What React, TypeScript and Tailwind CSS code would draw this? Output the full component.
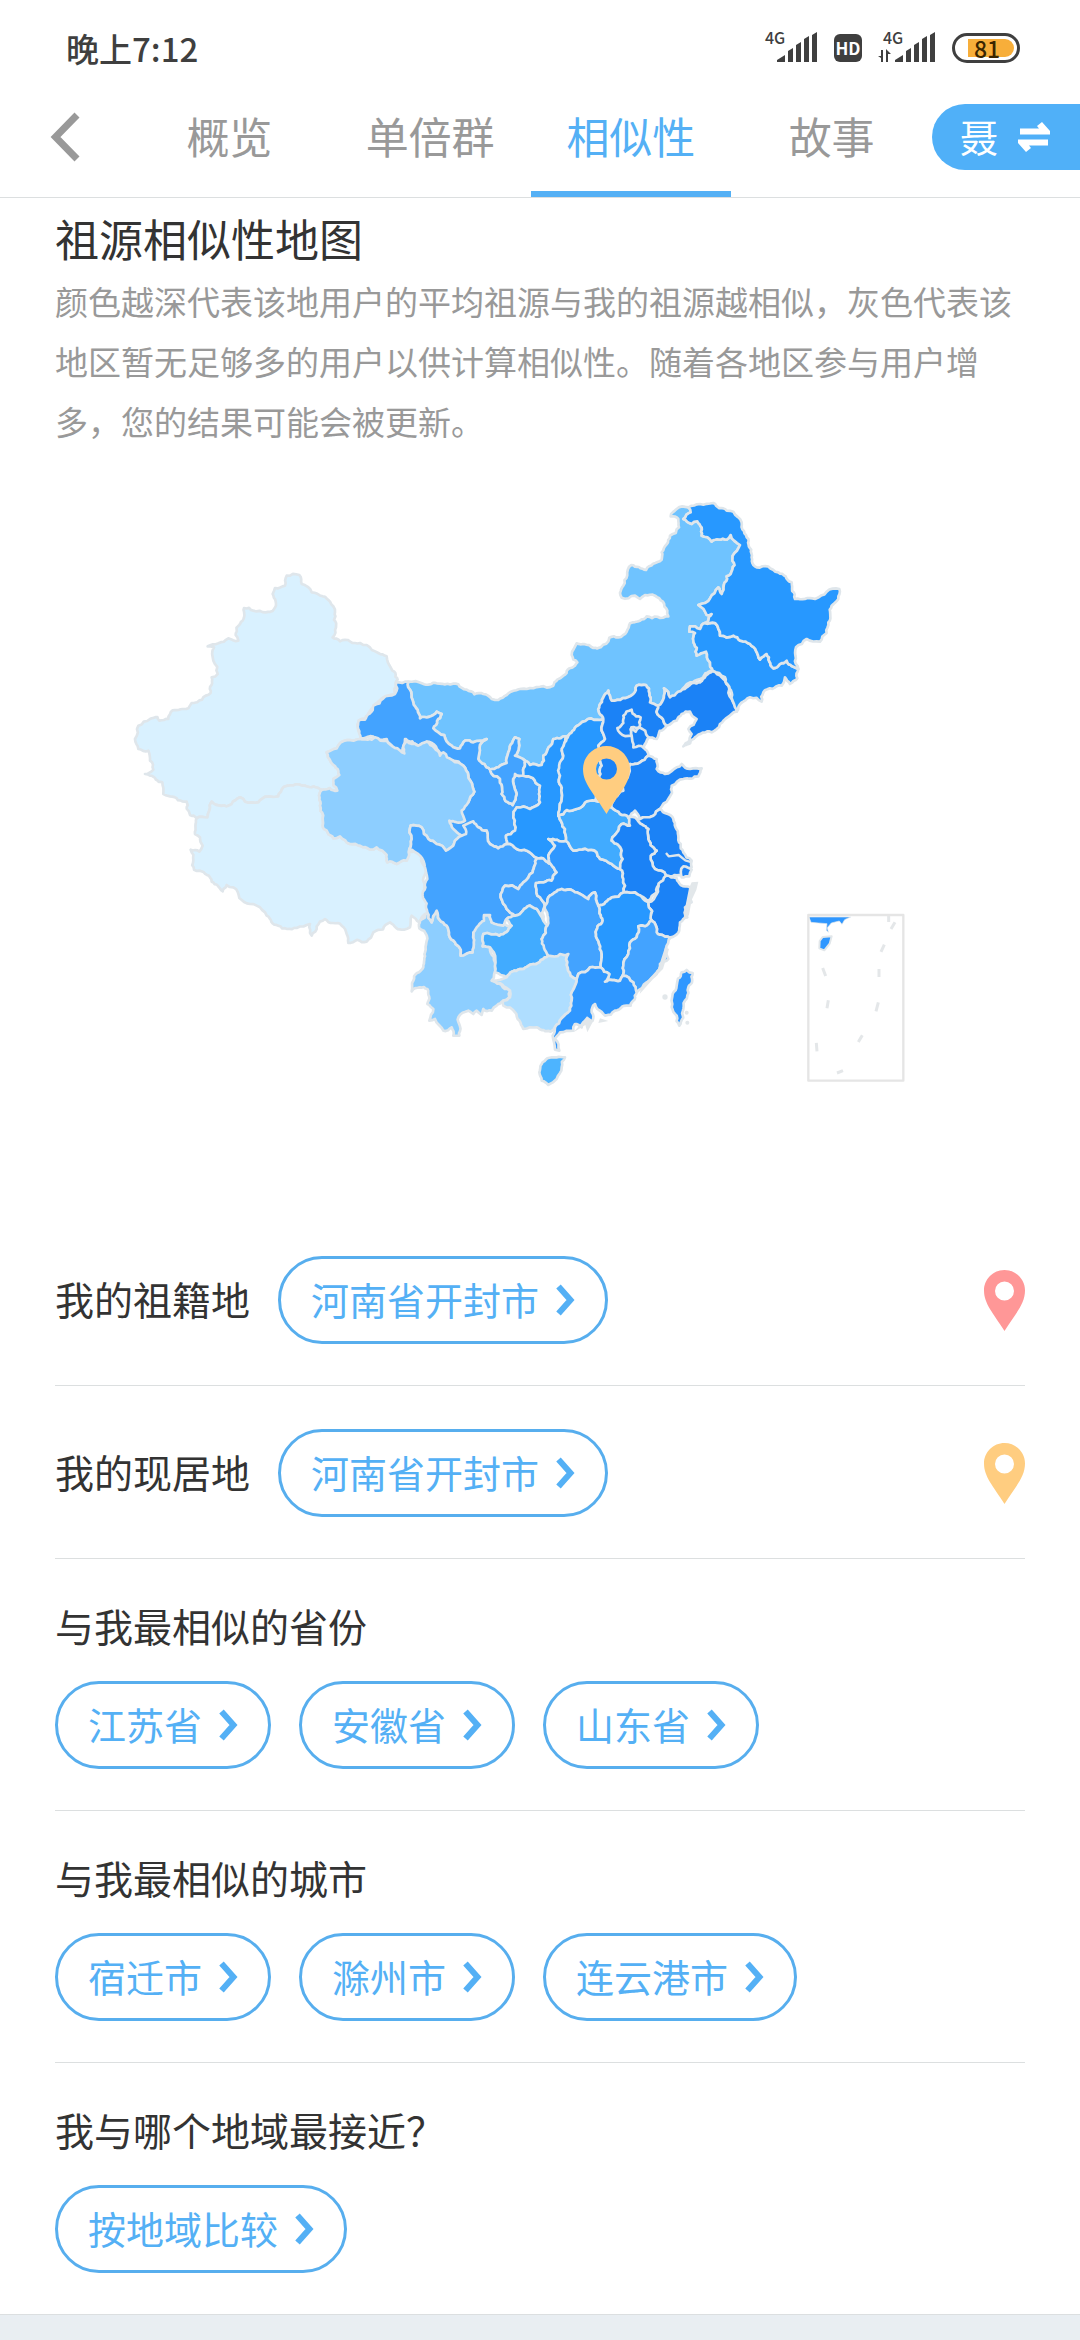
import { ReactNode } from "react";

interface Region {
  name: string;
  fill: string;
  origin: [number, number];
  points: string;
}

type Point = [number, number];

const NORTHWEST: Point = [0, 210];
const WEST: Point = [660, 510];
const CENTER: Point = [1260, 510];
const SOUTH: Point = [1260, 1050];
const NORTHEAST: Point = [1320, 0];

const regions: Region[] = [
  {
    name: "新疆",
    fill: "#d9f1ff",
    origin: NORTHWEST,
    points:
      "500,50 538,48 545,75 575,100 608,112 630,128 645,160 648,205 638,235 660,247 720,252 740,258 775,282 800,292 812,325 833,362 827,372 825,408 790,415 765,435 735,478 716,484 714,510 720,540 650,568 620,580 632,608 658,648 640,660 652,695 605,693 555,680 485,692 475,712 415,730 375,728 360,715 335,735 275,728 262,775 230,778 210,768 200,728 150,712 130,705 127,670 90,650 75,645 100,632 90,605 85,575 55,570 45,540 55,500 90,480 112,474 118,485 145,480 158,454 205,448 215,432 272,402 275,355 293,345 280,305 282,265 263,262 325,238 355,245 347,228 372,147 400,155 437,160 462,150 458,105 465,87 495,80",
  },
  {
    name: "西藏",
    fill: "#d9f1ff",
    origin: NORTHWEST,
    points:
      "230,778 262,775 275,728 335,735 360,715 375,728 415,730 475,712 485,692 555,680 605,693 600,740 608,800 640,838 660,832 690,855 750,872 770,865 800,888 802,910 830,915 860,905 865,880 890,875 905,895 920,935 925,1050 932,1075 915,1065 898,1090 875,1070 870,1105 852,1112 810,1090 760,1120 740,1148 685,1152 680,1125 665,1100 615,1080 590,1102 575,1130 570,1095 530,1107 475,1100 440,1070 410,1040 390,1035 340,985 320,978 308,997 275,968 240,935 222,932 220,905 212,872 238,878 248,860 240,835 225,825",
  },
  {
    name: "内蒙古",
    fill: "#6fc3ff",
    origin: NORTHEAST,
    points:
      "-455,578 -370,583 -305,586 -280,602 -230,615 -205,630 -185,633 -160,618 -100,600 -20,590 10,560 45,530 52,520 35,498 50,463 72,465 100,477 122,475 148,446 175,445 200,428 210,403 240,395 260,382 325,382 322,365 285,320 255,318 240,330 225,320 185,326 180,312 190,290 214,228 258,243 305,212 305,190 330,140 357,115 355,90 332,82 350,60 385,55 392,70 370,90 395,105 412,97 425,115 425,140 455,158 500,152 512,138 540,168 518,200 512,255 500,262 485,315 475,295 415,348 440,378 455,375 445,395 435,402 420,420 390,412 388,428 405,432 400,455 410,500 438,488 450,520 458,545 420,570 390,580 330,625 312,598 295,650 270,640 258,588 230,590 220,615 155,635 145,605 118,650 130,690 60,705 25,740 -20,750 -50,800 -55,828 -90,828 -105,815 -135,800 -122,750 -135,745 -155,790 -160,822 -210,842 -245,810 -220,750 -260,760 -285,755 -300,778 -325,770 -380,718 -355,675 -370,668 -420,688 -440,640",
  },
  {
    name: "甘肃",
    fill: "#43a3ff",
    origin: WEST,
    points:
      "205,68 168,70 165,105 130,118 100,140 75,182 57,184 55,210 62,238 100,233 140,240 190,283 195,240 235,262 260,248 305,290 370,320 385,350 403,398 385,430 330,450 300,500 330,570 378,560 415,505 440,515 450,555 475,568 500,555 498,530 525,515 520,475 530,445 570,450 600,430 600,380 550,350 525,345 530,405 518,438 485,405 480,360 450,332 415,300 440,240 400,250 375,245 360,268 335,260 280,208 305,165 290,158 240,178 220,130",
  },
  {
    name: "宁夏",
    fill: "#43a3ff",
    origin: WEST,
    points:
      "450,332 500,312 505,280 525,235 538,240 525,290 555,305 550,350 525,345 530,405 518,438 485,405 480,360",
  },
  {
    name: "青海",
    fill: "#8dceff",
    origin: NORTHWEST,
    points:
      "620,580 650,568 720,540 765,535 800,545 853,583 858,540 895,560 920,548 960,590 970,580 1030,620 1045,650 1063,698 1045,730 1025,755 1035,785 1010,790 988,785 1000,810 1025,830 1005,845 1000,860 978,875 950,855 925,840 905,805 872,800 875,840 868,870 860,905 830,915 802,910 800,888 770,865 750,872 690,855 660,832 640,838 608,800 600,740 605,693 652,695 640,660 658,648 632,608",
  },
  {
    name: "云南",
    fill: "#8dceff",
    origin: WEST,
    points:
      "262,760 275,790 290,755 320,800 345,850 362,890 398,880 400,820 432,768 450,768 455,790 490,795 515,800 478,830 430,825 428,862 450,865 465,925 455,965 510,995 508,1015 490,1025 470,1040 455,1055 430,1050 425,1068 410,1055 400,1065 385,1055 355,1075 358,1130 340,1130 335,1105 310,1115 285,1080 268,1085 280,1050 262,1035 262,990 240,985 215,997 220,965 250,925 255,880 252,815 238,808 240,785",
  },
  {
    name: "四川",
    fill: "#43a3ff",
    origin: WEST,
    points:
      "208,570 215,540 212,500 245,505 265,540 290,555 318,575 340,560 345,545 365,530 378,525 370,500 400,487 415,505 440,515 450,555 475,568 500,555 530,570 560,575 592,597 578,640 550,670 535,690 495,680 482,715 500,750 525,770 500,780 490,800 455,790 450,768 432,768 432,785 415,800 400,820 398,880 362,890 345,850 320,800 290,755 275,790 262,760 262,660 240,590",
  },
  {
    name: "重庆",
    fill: "#43a3ff",
    origin: WEST,
    points:
      "592,597 632,615 650,640 635,665 588,672 592,710 615,740 610,785 590,750 570,740 525,770 500,750 482,715 495,680 535,690 550,670 578,640",
  },
  {
    name: "贵州",
    fill: "#41abff",
    origin: WEST,
    points:
      "525,770 570,740 590,750 610,785 622,800 605,840 618,855 625,890 580,915 540,930 500,955 465,940 450,865 428,862 430,825 478,830 515,800 500,780",
  },
  {
    name: "广西",
    fill: "#afdeff",
    origin: WEST,
    points:
      "625,890 670,880 685,885 692,950 710,960 695,1025 690,1055 645,1105 632,1118 590,1105 550,1110 525,1060 490,1040 490,1025 510,1015 510,995 460,965 500,955 540,930 580,915",
  },
  {
    name: "陕西",
    fill: "#2798ff",
    origin: WEST,
    points:
      "685,230 665,275 668,300 660,350 665,400 655,470 675,510 678,545 625,540 645,560 625,590 632,615 592,597 560,575 530,570 500,555 498,530 525,515 520,475 530,445 570,450 600,430 600,380 550,350 555,305 570,318 605,318 610,290 640,240",
  },
  {
    name: "湖北",
    fill: "#2f97ff",
    origin: CENTER,
    points:
      "25,540 78,545 100,575 170,580 180,600 215,615 240,630 250,660 252,700 215,715 175,740 165,700 145,720 110,700 65,690 25,715 15,740 -8,710 -12,672 35,665 50,640 32,615 25,590 45,560",
  },
  {
    name: "河南",
    fill: "#41abff",
    origin: CENTER,
    points:
      "55,470 110,450 165,425 215,445 240,465 265,475 270,500 245,495 235,515 215,545 245,575 248,600 240,630 215,615 180,600 170,580 100,575 78,545 75,510",
  },
  {
    name: "山西",
    fill: "#2798ff",
    origin: CENTER,
    points:
      "85,230 120,195 190,180 185,215 195,240 175,260 185,320 175,370 165,425 110,450 55,470 65,400 60,350 70,290 65,270",
  },
  {
    name: "河北",
    fill: "#1b82f6",
    origin: CENTER,
    points:
      "190,180 178,140 205,95 215,125 280,105 290,80 318,78 330,130 355,140 352,165 380,200 350,240 325,235 310,265 325,290 300,310 270,315 250,395 215,445 165,425 175,370 185,320 175,260 195,240 185,215",
  },
  {
    name: "北京",
    fill: "#1b82f6",
    origin: CENTER,
    points:
      "275,152 288,172 302,175 298,205 275,205 275,230 240,222 232,207 250,192 250,170",
  },
  {
    name: "天津",
    fill: "#1b82f6",
    origin: CENTER,
    points: "298,205 325,235 310,265 280,265 275,230 275,205 287,218",
  },
  {
    name: "辽宁",
    fill: "#1b82f6",
    origin: CENTER,
    points:
      "352,165 355,140 372,88 390,115 440,85 480,70 518,35 545,55 565,80 575,120 590,158 540,195 515,220 465,235 430,262 455,225 445,210 470,180 450,158 425,165 410,185 380,200",
  },
  {
    name: "山东",
    fill: "#1b82f6",
    origin: CENTER,
    points:
      "325,290 350,300 350,330 375,345 410,325 425,315 450,330 485,328 475,352 430,360 395,380 385,420 360,450 340,470 300,480 285,455 265,475 240,465 215,445 250,395 270,315 300,310",
  },
  {
    name: "江苏",
    fill: "#1b82f6",
    origin: CENTER,
    points:
      "290,480 300,480 340,470 360,450 400,480 415,530 430,580 455,605 455,625 430,650 378,650 345,630 332,590 350,575 325,535 325,510",
  },
  {
    name: "上海",
    fill: "#1b82f6",
    origin: CENTER,
    points: "430,622 455,632 448,652 425,655",
  },
  {
    name: "安徽",
    fill: "#1b82f6",
    origin: CENTER,
    points:
      "265,475 290,480 325,510 325,535 350,575 332,590 345,630 378,650 350,700 325,725 285,700 252,700 250,660 240,630 248,600 245,575 215,545 235,515 245,495 270,500",
  },
  {
    name: "浙江",
    fill: "#1b82f6",
    origin: SOUTH,
    points:
      "325,190 350,165 378,110 410,118 422,138 450,145 462,150 452,170 455,190 435,205 442,235 420,250 418,268 405,290 392,295 350,280 335,245",
  },
  {
    name: "湖南",
    fill: "#43a3ff",
    origin: SOUTH,
    points:
      "15,200 25,175 65,150 110,160 145,180 165,160 175,200 188,245 168,285 185,345 182,385 150,385 115,405 110,420 92,410 85,345 60,345 25,350 5,300 22,260",
  },
  {
    name: "江西",
    fill: "#2798ff",
    origin: SOUTH,
    points:
      "175,200 215,175 252,160 285,160 325,190 335,245 315,262 295,262 290,295 270,310 265,345 250,380 248,410 240,425 195,428 208,405 182,385 185,345 168,285 188,245",
  },
  {
    name: "福建",
    fill: "#43a3ff",
    origin: SOUTH,
    points:
      "335,245 350,280 392,295 378,330 385,360 360,375 350,405 320,430 290,460 280,430 248,410 250,380 265,345 270,310 290,295 295,262 315,262",
  },
  {
    name: "广东",
    fill: "#2f97ff",
    origin: SOUTH,
    points:
      "110,420 115,405 150,385 182,385 208,405 195,428 240,425 248,410 280,430 290,460 272,500 225,515 195,530 172,510 165,495 155,520 158,545 130,550 125,565 105,555 100,575 60,580 45,600 58,635 45,632 38,590 45,565 90,515 95,485",
  },
  {
    name: "海南",
    fill: "#4db4ff",
    origin: SOUTH,
    points: "22,658 50,655 75,655 65,685 50,720 25,738 5,725 -2,700 5,675",
  },
  {
    name: "台湾",
    fill: "#2f97ff",
    origin: SOUTH,
    points: "425,400 440,393 458,402 445,445 430,510 418,560 410,530 395,505 398,465 410,440",
  },
  {
    name: "吉林",
    fill: "#2798ff",
    origin: NORTHEAST,
    points:
      "388,428 390,412 420,420 435,402 465,402 480,440 520,440 540,455 570,465 600,512 620,495 640,538 680,515 715,540 712,568 690,585 675,565 665,590 610,610 605,638 570,625 530,668 515,610 495,565 458,545 450,520 438,488 410,500 400,455 405,432",
  },
  {
    name: "黑龙江",
    fill: "#2798ff",
    origin: NORTHEAST,
    points:
      "385,55 420,45 460,42 500,65 520,68 545,100 565,150 590,235 655,250 695,280 705,330 765,330 800,308 838,300 835,330 815,350 805,400 780,458 740,450 708,475 715,540 680,515 640,538 620,495 600,512 570,465 540,455 520,440 480,440 465,402 435,402 445,395 455,375 440,378 415,348 475,295 485,315 500,262 512,255 518,200 540,168 512,138 500,152 455,158 425,140 425,115 412,97 395,105 370,90 392,70",
  },
];

// Splits an edge into short crooked steps. Endpoints are ordered first,
// so two neighbours always get the same line for a shared border.
function roughEdge(a: Point, b: Point): Point[] {
  const length = Math.hypot(b[0] - a[0], b[1] - a[1]);

  if (length < 11) return [a];

  const flip = a[0] > b[0] || (a[0] === b[0] && a[1] > b[1]);
  const [p, q] = flip ? [b, a] : [a, b];

  const noise = Math.sin(p[0] * 12.9 + p[1] * 78.2 + q[0] * 37.7 + q[1] * 4.1) * 43758.5;
  const shift = (noise - Math.floor(noise) - 0.5) * 0.32;

  const middle: Point = [
    (p[0] + q[0]) / 2 - (q[1] - p[1]) * shift,
    (p[1] + q[1]) / 2 + (q[0] - p[0]) * shift,
  ];

  return [...roughEdge(a, middle), ...roughEdge(middle, b)];
}

function outline({ origin, points }: Region) {
  const corners = points.split(" ").map((pair): Point => {
    const [x, y] = pair.split(",").map(Number);
    return [x + origin[0], y + origin[1]];
  });

  return corners
    .flatMap((corner, i) => roughEdge(corner, corners[(i + 1) % corners.length]))
    .map(([x, y]) => `${x.toFixed(1)},${y.toFixed(1)}`)
    .join(" ");
}

const PIN_PATH =
  "M20.5 0C9.2 0 0 9.2 0 20.5 0 34 9.5 43.5 20.5 61 31.5 43.5 41 34 41 20.5 41 9.2 31.8 0 20.5 0Zm0 11.5a9.5 9.5 0 1 1 0 19 9.5 9.5 0 0 1 0-19Z";

const Pin = ({ color }: { color: string }) => (
  <svg width="41" height="61" viewBox="0 0 41 61" aria-hidden="true">
    <path d={PIN_PATH} fill={color} fillRule="evenodd" />
  </svg>
);

const Signal = ({ data = false }: { data?: boolean }) => (
  <svg width="58" height="60" viewBox="0 -10 58 60" fill="#3f3f3f" aria-hidden="true">
    <text x="5" y="16" fontSize="16" fontWeight="500" fontFamily="Noto Sans CJK SC">
      4G
    </text>
    {data && <path d="M5 22v12H3v-4l-3-2h3v-6ZM8 34V21l5 5h-3v8Z" />}
    <path d="M17 34v-2l8-5v7ZM28 34V23l5-3v14ZM36 34V17l5-3v20ZM44 34V11l5-3v26ZM52 34V7l5-3v30Z" />
  </svg>
);

const StatusBar = () => (
  <div className="flex h-[77px] items-center justify-between pt-[19px] pr-[60px] pl-[66px] text-[#3f3f3f]">
    <span className="text-[33px] leading-9 font-medium">晚上7:12</span>

    <div className="flex items-center">
      <Signal />
      <span className="mr-4 ml-4 flex h-7 w-7 items-center justify-center rounded-md bg-[#3f3f3f] text-[17px] font-bold text-white">
        HD
      </span>
      <Signal data />
      <span className="ml-4 flex h-[30px] w-[68px] items-center rounded-full border-3 border-[#3f3f3f] pr-[3px] pl-[13px]">
        <span className="flex h-[18px] w-full items-center rounded-r-full rounded-l-xs bg-[#f7ae3a] pl-[6px] text-[23px] leading-none font-medium text-[#3a2500]">
          81
        </span>
      </span>
    </div>
  </div>
);

const tabs = ["概览", "单倍群", "相似性", "故事"];

const NavBar = () => (
  <nav className="flex h-[121px] items-stretch border-b border-[#dcdfe0]">
    <button type="button" aria-label="返回" className="flex w-[129px] items-center pl-[50px]">
      <svg width="30" height="50" viewBox="0 0 30 50" aria-hidden="true">
        <path d="M27 3 5.5 25 27 47" fill="none" stroke="#999" strokeWidth="7" />
      </svg>
    </button>

    {tabs.map((tab) => (
      <button
        key={tab}
        type="button"
        className={
          tab === "相似性"
            ? "flex-1 border-b-6 border-[#54b0f5] pt-[2px] text-[43px] text-[#54b0f5]"
            : "flex-1 pb-1 text-[43px] text-[#999]"
        }
      >
        {tab}
      </button>
    ))}

    <button
      type="button"
      className="flex h-[66px] w-[148px] items-center gap-5 self-center rounded-l-full bg-[#50b0f8] pl-7 text-[38px] text-white"
    >
      <span className="pb-1">聂</span>
      <svg width="32" height="30" viewBox="0 0 32 30" fill="#fff" aria-hidden="true">
        <path d="M2 6.5h19L19 4l5-4 8 9v3.5H2ZM30 23.5H11L13 26l-5 4-8-9v-3.5h30Z" />
      </svg>
    </button>
  </nav>
);

const SimilarityMap = () => (
  <svg
    className="block w-full"
    viewBox="0 452 1080 762"
    role="img"
    aria-label="祖源相似性地图"
  >
    <g transform="translate(120 490) scale(0.33333)" strokeLinejoin="round">
      {regions.map((region) => (
        <polygon
          key={region.name}
          points={outline(region)}
          fill={region.fill}
          stroke="#dfe6eb"
          strokeWidth="8"
        />
      ))}

      <path
        d="m1638 1092 8 10 30-4 20 16 20 6"
        fill="none"
        stroke="#dfe6eb"
        strokeWidth="7"
      />

      <g fill="#e2e7ea">
        <circle cx="1635" cy="1524" r="8" />
        <circle cx="1700" cy="1571" r="6" />
        <circle cx="1702" cy="1601" r="6" />
        <path d="m1715 1180 20-2-6 25-14 30-8 45-18 20 8-50 10-50Z" />
        <path d="m1635 1375 12 5-18 60-30 30-40 45 5-20 50-55Z" />
        <path d="m1420 1595-18 35-6-22-35 22 40-48ZM1440 1588l25 8-30 6Z" />
      </g>

      {/* South China Sea inset */}

      <g transform="translate(2010 1230)">
        <path
          d="M57 54h125l-18 8-8 14-8-10-24 6-12 14 3 14-6-6 2-20-26-2-22-2Z"
          fill="#2f97ff"
          stroke="#e2e7ea"
          strokeWidth="2"
        />
        <path
          d="m98 114 27-2-6 22-16 20-15-6 1-22Z"
          fill="#2f97ff"
          stroke="#e2e7ea"
          strokeWidth="6"
        />
        <path
          d="M296 51v18M315 70l-12 20M283 137l-10 22M267 210v24M98 207l9 24M115 304l-4 24M265 310l-7 27M217 409l-12 20M79 432l2 25M141 522l18-7"
          fill="none"
          stroke="#e4e7e9"
          strokeWidth="9"
        />
        <rect x="55" y="48" width="285" height="497" fill="none" stroke="#e5e5e5" strokeWidth="7" />
      </g>
    </g>

    <path
      transform="translate(583 747)"
      d="M23.5 0C10.5 0 0 10.5 0 23 0 38 11 47 23.5 68 36 47 47 38 47 23 47 10.5 36.5 0 23.5 0Zm0 12.5a10.5 10.5 0 1 1 0 21 10.5 10.5 0 0 1 0-21Z"
      fill="#ffcd80"
      fillRule="evenodd"
    />
  </svg>
);

const Pill = ({ children }: { children: ReactNode }) => (
  <button
    type="button"
    className="flex h-[88px] items-center gap-[17px] rounded-full border-3 border-[#57aeee] px-[30px] text-[38px] text-[#54b0f5]"
  >
    <span className="pb-1">{children}</span>
    <svg width="19" height="32" viewBox="0 0 19 32" aria-hidden="true">
      <path d="m2.5 2.5 12 13.5-12 13.5" fill="none" stroke="#54b0f5" strokeWidth="6" />
    </svg>
  </button>
);

const places = [
  { label: "我的祖籍地", value: "河南省开封市", color: "#ff9797" },
  { label: "我的现居地", value: "河南省开封市", color: "#ffcd80" },
];

const groups = [
  { title: "与我最相似的省份", items: ["江苏省", "安徽省", "山东省"] },
  { title: "与我最相似的城市", items: ["宿迁市", "滁州市", "连云港市"] },
  { title: "我与哪个地域最接近？", items: ["按地域比较"] },
];

const App = () => {
  return (
    <div
      lang="zh-CN"
      className="flex min-h-screen flex-col bg-white font-['Noto_Sans_CJK_SC',sans-serif] text-[#333]"
    >
      <StatusBar />
      <NavBar />

      <main>
        <div className="px-[55px] pt-[10px]">
          <h1 className="text-[44px] leading-[60px]">祖源相似性地图</h1>
          <p className="mt-[3px] text-[33px] leading-[60px] text-[#999]">
            颜色越深代表该地用户的平均祖源与我的祖源越相似，灰色代表该地区暂无足够多的用户以供计算相似性。随着各地区参与用户增多，您的结果可能会被更新。
          </p>
        </div>

        <SimilarityMap />

        {places.map((place) => (
          <div
            key={place.label}
            className="mx-[55px] flex items-center gap-7 border-b border-[#dcdfe0] pt-[43px] pb-[41px]"
          >
            <span className="pb-1 text-[39px]">{place.label}</span>
            <Pill>{place.value}</Pill>
            <span className="ml-auto">
              <Pin color={place.color} />
            </span>
          </div>
        ))}

        {groups.map((group, i) => (
          <section
            key={group.title}
            className={
              i < groups.length - 1
                ? "mx-[55px] border-b border-[#dcdfe0] pt-[38px] pb-[41px]"
                : "px-[55px] pt-[38px] pb-[41px]"
            }
          >
            <h2 className="text-[39px] leading-[56px]">{group.title}</h2>
            <div className="mt-7 flex flex-wrap gap-7">
              {group.items.map((item) => (
                <Pill key={item}>{item}</Pill>
              ))}
            </div>
          </section>
        ))}
      </main>

      <footer className="min-h-6 flex-1 border-t border-[#dcdfe0] bg-[#e9eef2]" />
    </div>
  );
};

export default App;
